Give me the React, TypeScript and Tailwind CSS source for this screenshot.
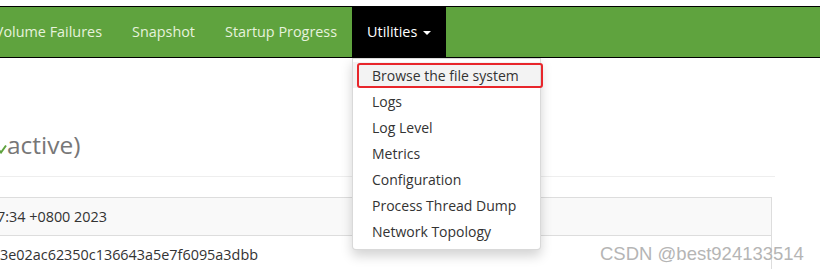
import React from "react";

const font = { fontFamily: '"Open Sans", "Noto Sans", Arial, sans-serif' };

export default function App() {
  const items = [
    "Browse the file system",
    "Logs",
    "Log Level",
    "Metrics",
    "Configuration",
    "Process Thread Dump",
    "Network Topology",
  ];
  return (
    <div
      className="relative w-[820px] h-[269px] overflow-hidden bg-white text-[#333]"
      style={font}
    >
      <div className="h-[6px]" />
      <nav className="h-[52px] border-y border-black bg-[#5fa33e] flex items-stretch text-[14.4px] text-[#e6f2dc]">
        <div className="w-[117px] pr-[15px] flex items-center justify-end overflow-hidden whitespace-nowrap">
          Volume Failures
        </div>
        <div className="px-[15px] flex items-center whitespace-nowrap">Snapshot</div>
        <div className="px-[15px] flex items-center whitespace-nowrap">Startup Progress</div>
        <div className="px-[15px] flex items-center whitespace-nowrap bg-black text-white">
          Utilities
          <span className="ml-[6px] inline-block w-0 h-0 border-x-[4px] border-x-transparent border-t-[4px] border-t-white mt-[2px]" />
        </div>
      </nav>

      <div className="w-[775px]">
        <div className="h-[119px] border-b border-[#eee] flex items-end pb-[14px]">
          <div className="flex items-center text-[24.5px] leading-[34px] text-[#777] whitespace-nowrap">
            <svg width="7" height="10" viewBox="0 0 7 10" className="mt-[8px]">
              <path d="M-2 5 L1 8.5 L6 1.5" fill="none" stroke="#5fa33e" strokeWidth="2" />
            </svg>
            active)
          </div>
        </div>
        <div className="h-[20px]" />
        <div className="w-[772px] border-t border-r border-[#ddd] text-[14.4px]">
          <div className="h-[38px] bg-[#f9f9f9] border-b border-[#ddd] flex items-center whitespace-nowrap ml-[-3px]">
            7:34 +0800 2023
          </div>
          <div className="h-[38px] border-b border-[#ddd] flex items-center whitespace-nowrap">
            3e02ac62350c136643a5e7f6095a3dbb
          </div>
        </div>
      </div>

      <div className="absolute left-[352px] top-[58px] w-[189px] h-[192px] bg-white border border-black/15 rounded-b-[4px] shadow-[0_6px_12px_rgba(0,0,0,0.175)] pt-[3px]">
        {items.map((t, i) => (
          <div
            key={t}
            className={`h-[26px] pl-[19px] flex items-center text-[14px] text-[#333] whitespace-nowrap ${
              i === 0 ? "bg-[#f3f3f3]" : ""
            }`}
          >
            {t}
          </div>
        ))}
      </div>
      <div className="absolute left-[357px] top-[63px] w-[186px] h-[25px] border-2 border-[#e8262b] rounded-[3px]" />

      <div
        className="absolute left-[600px] top-[240px] text-[18.5px] text-[#b5b5b5] whitespace-nowrap"
        style={{ fontFamily: '"Liberation Sans", Arial, sans-serif' }}
      >
        CSDN @best924133514
      </div>
    </div>
  );
}
